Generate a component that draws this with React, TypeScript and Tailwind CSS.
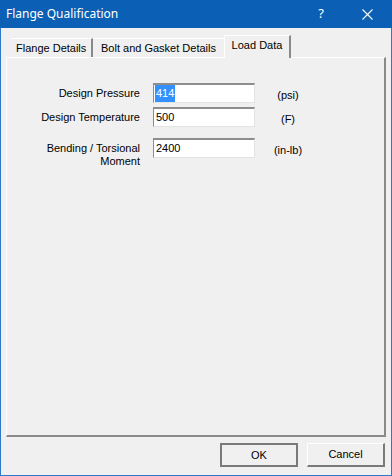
const fields = [
  { label: ["Design Pressure"], value: "414", unit: "(psi)", selected: true },
  { label: ["Design Temperature"], value: "500", unit: "(F)" },
  { label: ["Bending / Torsional", "Moment"], value: "2400", unit: "(in-lb)" },
]

export default function App() {
  return (
    <div className="w-[392px] h-[476px] flex flex-col bg-[#f0f0f0] border-x border-b border-[#2d78c8] font-['Liberation_Sans',Arial,sans-serif] text-[11px] text-black">
      <div className="h-[28px] -mx-px bg-[#0b5fb5] flex items-center text-white">
        <span className="pl-[6px] text-[12px] font-['Noto_Sans',sans-serif]">Flange Qualification</span>
        <span className="ml-auto w-[46px] text-center text-[13px] font-['Noto_Sans',sans-serif]">?</span>
        <span className="w-[46px] flex justify-center mr-[2px]">
          <svg width="11" height="11" viewBox="0 0 11 11">
            <path d="M0.5 0.5L10.5 10.5M10.5 0.5L0.5 10.5" stroke="white" strokeWidth="1.1" />
          </svg>
        </span>
      </div>

      <div className="pl-[5px] pr-[5px] pt-[7px]">
        <TabBar />
        <div className="h-[380px] border-t border-l border-t-white border-l-white border-r-2 border-b-2 border-r-[#8a8a8a] border-b-[#8a8a8a]">
          <div className="pt-[25px] flex flex-col gap-[3px]">
            {fields.map((f, i) => <FieldRow key={f.value} f={f} extraTop={i === 2} />)}
          </div>
        </div>
      </div>

      <div className="flex justify-end gap-[9px] pr-[6px] mt-[6px]">
        <Btn label="OK" primary />
        <Btn label="Cancel" />
      </div>
    </div>
  )
}

const TabBar = () => (
  <div className="h-[22px] flex items-end pl-[5px]">
    <div className="h-[19px] w-[82px] pl-[5px] flex items-center border-r-2 border-r-[#8a8a8a] border-t border-t-white">Flange Details</div>
    <div className="h-[19px] w-[131px] flex items-center justify-center border-t border-t-white">Bolt and Gasket Details</div>
    <div className="h-[23px] w-[67px] -mb-px pb-[4px] flex items-center justify-center bg-[#f0f0f0] border-t border-l border-t-white border-l-white border-r-2 border-r-[#8a8a8a] relative">Load Data</div>
  </div>
)

const FieldRow = ({ f, extraTop }: { f: { label: string[]; value: string; unit: string; selected?: boolean }; extraTop: boolean }) => (
  <div className={`flex items-start ${extraTop ? "mt-[8px]" : ""}`}>
    <div className="w-[133px] text-right leading-[13px] pt-[4px]">
      {f.label.map(l => <div key={l}>{l}</div>)}
    </div>
    <div className="ml-[13px] w-[102px] h-[20px] bg-white border-t-2 border-l border-t-[#8d8d8d] border-l-[#8d8d8d] border-r border-b border-r-[#e3e3e3] border-b-[#e3e3e3] flex items-center pl-px">
      <span className={f.selected ? "bg-[#3390ff] text-white px-px" : "px-px"}>{f.value}</span>
    </div>
    <div className="w-[66px] text-center pt-[4px]">{f.unit}</div>
  </div>
)

const Btn = ({ label, primary }: { label: string; primary?: boolean }) => (
  <div className={`w-[78px] h-[24px] flex items-center justify-center bg-[#f0f0f0] ${primary ? "border-2 border-[#7a7a7a]" : "border border-t-white border-l-white border-r-2 border-b-2 border-r-[#7a7a7a] border-b-[#7a7a7a]"}`}>
    {label}
  </div>
)
